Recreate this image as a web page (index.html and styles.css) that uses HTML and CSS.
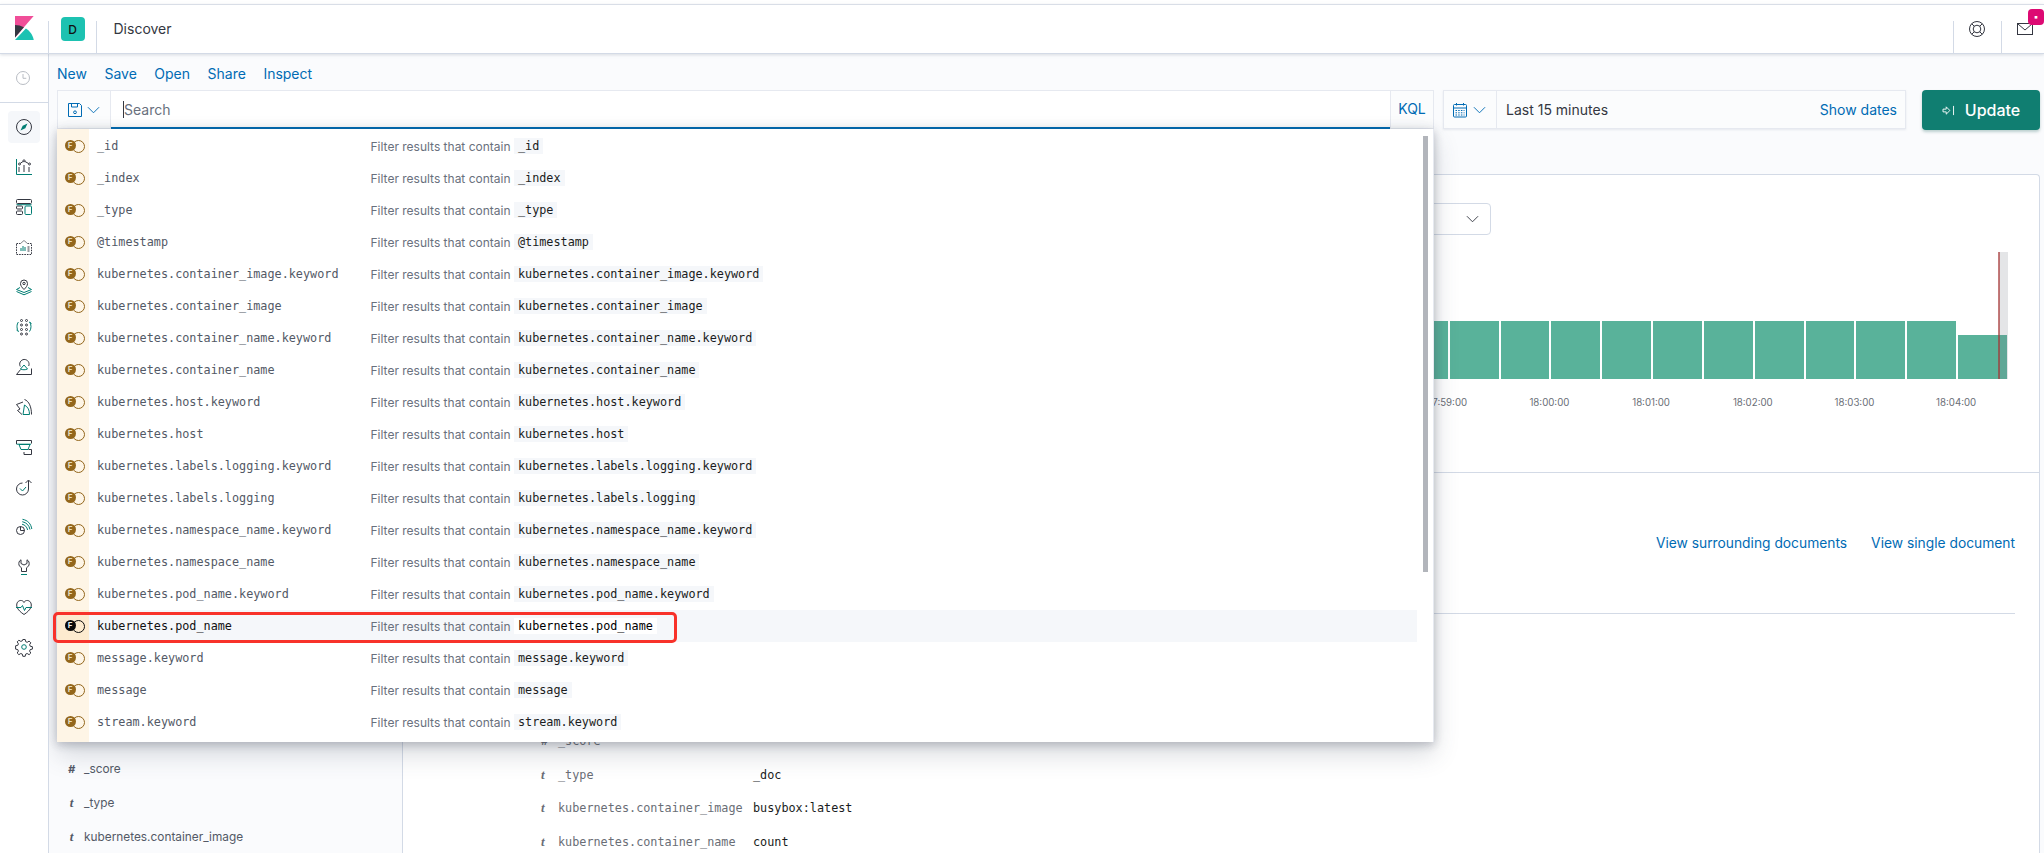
FILE: index.html
```html
<!DOCTYPE html>
<html lang="en">
<head>
<meta charset="utf-8">
<title>Discover - Kibana</title>
<link rel="stylesheet" href="styles.css">
</head>
<body>
<header class="topbar">
  <div class="logo-cell">
    <svg class="logo" viewBox="0 0 32 32"><path fill="#F04E98" d="M4 0v28.8L28.9 0z"/><path fill="#343741" d="M4 12v16.8l11.900-13.700A24.700 24.700 0 0 0 4 12"/><path fill="#1BC2B2" d="M18.500 16.700L4 32h25c-1.200-6.500-5.200-12.100-10.500-15.300"/></svg>
  </div>
  <span class="sep"></span>
  <div class="avatar-cell"><span class="avatar">D</span></div>
  <span class="sep"></span>
  <span class="crumb">Discover</span>
  <span class="sep sep-push"></span>
  <div class="head-btn head-btn-help">
    <svg class="ic" viewBox="0 0 16 16"><circle cx="8" cy="8" r="7.500"/><circle cx="8" cy="8" r="3.800"/><path d="M2.700 2.700l2.600 2.600M13.300 2.700l-2.600 2.600M2.700 13.300l2.600-2.600M13.300 13.300l-2.600-2.600"/></svg>
  </div>
  <span class="sep"></span>
  <div class="head-btn head-btn-mail">
    <svg class="ic" viewBox="0 0 16 16"><rect x=".500" y="2.500" width="15" height="11"/><path d="M1 3l7 6 7-6"/></svg>
    <span class="badge">▪</span>
  </div>
</header>

<div class="shell">
  <nav class="rail">
    <div class="recent"><svg class="ic ic-muted" viewBox="0 0 16 16"><circle cx="8" cy="8" r="6.500"/><path d="M8 4v4.300h3.300"/></svg></div>
    <ul class="rail-list">
      <li class="rail-item rail-active"><svg class="ic" viewBox="0 0 16 16"><circle cx="8" cy="8" r="7.500"/><path class="fill-teal" d="M11.500 4.500L9.300 9.300 4.500 11.500 6.700 6.700z"/></svg></li>
      <li class="rail-item"><svg class="ic" viewBox="0 0 16 16"><path class="teal" d="M.500 0v15.500H16"/><path d="M3 13V8M8 13V6M13 13V8M4.300 4.300L7 2.500M9 2.500l3.500 2"/><circle cx="3.500" cy="5" r="1"/><circle cx="8" cy="1.800" r="1"/><circle cx="13.500" cy="5" r="1"/></svg></li>
      <li class="rail-item"><svg class="ic" viewBox="0 0 16 16"><rect x=".500" y=".500" width="15" height="4" rx="1"/><rect x=".500" y="7" width="6" height="3" rx="1"/><rect x=".500" y="12" width="6" height="3.500" rx="1"/><rect class="teal" x="9" y="7" width="6.500" height="8.500" rx="1"/><path class="teal" d="M.500 5.700h15"/></svg></li>
      <li class="rail-item"><svg class="ic" viewBox="0 0 16 16"><path stroke-dasharray="1.600 1" d="M.500 4.500h4l3.500-3 3.500 3h4v11H.500z"/><path class="teal" d="M5 12V9M7 12V7M9 12V8"/><path d="M11.500 8h2M11.500 10h2M11.500 12h2"/></svg></li>
      <li class="rail-item"><svg class="ic" viewBox="0 0 16 16"><path d="M8 10.500C6 8.500 4.500 6.800 4.500 4.500a3.500 3.500 0 0 1 7 0c0 2.300-1.500 4-3.500 6z"/><circle cx="8" cy="4.500" r="1.200"/><path class="teal" d="M4 8.500L.500 10.500 8 13.500l7.500-3L12 8.500M.500 12.500L8 15.800l7.500-3.300"/></svg></li>
      <li class="rail-item"><svg class="ic" viewBox="0 0 16 16"><circle cx="5.500" cy="1.500" r="1"/><circle cx="10.500" cy="1.500" r="1"/><circle cx="5.500" cy="6" r="1"/><circle cx="10.500" cy="6" r="1"/><circle cx="5.500" cy="10.500" r="1"/><circle cx="10.500" cy="10.500" r="1"/><circle cx="5.500" cy="15" r="1"/><circle cx="10.500" cy="15" r="1"/><path class="teal" d="M2.500 3C.500 5 .500 10 2.500 12.500M.500 11l2 1.500M13.500 3c2 2 2 7 0 9.500M15.500 4.500l-2-1.500"/></svg></li>
      <li class="rail-item"><svg class="ic" viewBox="0 0 16 16"><path d="M4.600 10.500L.500 15.500h15V9.500M4.300 7.500A4.700 4.700 0 1 1 12.700 7"/><path class="teal" d="M4.500 10L8 6l3.500 4c-2 1-5 1-7 0z"/></svg></li>
      <li class="rail-item"><svg class="ic" viewBox="0 0 16 16"><path d="M8.500.500C13 2 15.500 8 15.500 15.500M7 3L.500 5.500l3.500 4.500-2.500 1.500 4.500 4"/><path class="teal" d="M8.500 6c3.500 2 5 5 5 9.500H7z"/></svg></li>
      <li class="rail-item"><svg class="ic" viewBox="0 0 16 16"><path d="M.500 1.500h15v3M.500 1.500v3.500M12.500 10.500h3v5H8V13"/><path class="teal" d="M3 5.500h11l-2 5H5zM.500 5.200H15"/></svg></li>
      <li class="rail-item"><svg class="ic" viewBox="0 0 16 16"><path d="M12.500 1.500v8.500a6 6 0 1 1-6-6M9.500 4l3-3 3 3"/><path class="teal" d="M4 9.500l2.500 2.500 3.500-4"/></svg></li>
      <li class="rail-item"><svg class="ic" viewBox="0 0 16 16"><circle cx="4.500" cy="11.500" r="4"/><path d="M4.500 7.500v4h4"/><path class="teal" d="M6 5.200c3 .6 5 2.800 5.600 5.800M6.300 2.700c4.200.8 6.800 3.600 7.700 7.800M6.500.3c5.300 1 8.400 4.400 9.300 9.700"/></svg></li>
      <li class="rail-item"><svg class="ic" viewBox="0 0 16 16"><path d="M5 .800C3 1.800 2.500 4 3 6c.5 1.500 1.800 2.300 2.500 2.800v3.700h5V8.800c.7-.5 2-1.300 2.500-2.800.5-2 0-4.200-2-5.200V4.500L8 6 5 4.500z"/><path class="teal" d="M5 15.500h6"/></svg></li>
      <li class="rail-item"><svg class="ic" viewBox="0 0 16 16"><path d="M8 15.500C5 13.500 2 11 1 8 .2 5.500 1 2 4.300 1.500 6 1.300 7.300 2 8 3.500 8.700 2 10 1.300 11.700 1.500 15 2 15.800 5.500 15 8 14 11 11 13.500 8 15.500z"/><path class="teal" d="M0 8.500h5l1.500-2 2 5 1.500-3h6"/></svg></li>
      <li class="rail-item"><svg class="ic" viewBox="0 0 16 16"><path d="M6.800.500h2.400l.5 2.200 1.500.6 1.900-1.200 1.700 1.700-1.200 1.900.6 1.500 2.200.5v2.400l-2.200.5-.6 1.500 1.200 1.900-1.700 1.700-1.900-1.200-1.500.6-.5 2.200H6.800l-.5-2.200-1.500-.6-1.900 1.200-1.700-1.700 1.200-1.900-.6-1.500-2.200-.5V6.800l2.200-.5.6-1.500L1.200 2.900 2.900 1.200l1.900 1.200 1.500-.6z"/><circle class="teal" cx="8" cy="8" r="2.300"/></svg></li>
    </ul>
  </nav>

  <main class="main">
    <div class="menu">
      <a class="menu-link">New</a>
      <a class="menu-link">Save</a>
      <a class="menu-link">Open</a>
      <a class="menu-link">Share</a>
      <a class="menu-link">Inspect</a>
    </div>

    <div class="query-row">
      <div class="search">
        <div class="save-btn">
          <svg class="ic ic-blue" viewBox="0 0 16 16"><path d="M1.500 1.500h11l2 2v11h-13z"/><path d="M4.500 1.500v3.500h6V1.500"/><circle cx="8" cy="10.300" r="1.400"/></svg>
          <svg class="chev ic-blue" viewBox="0 0 14 8"><path d="M1 1l6 6 6-6"/></svg>
        </div>
        <div class="search-input"><span class="caret"></span><span class="placeholder">Search</span></div>
        <a class="kql">KQL</a>
      </div>
      <div class="time">
        <div class="time-btn">
          <svg class="ic ic-blue" viewBox="0 0 16 16"><rect x="1.500" y="2.500" width="13" height="12.500" rx="1"/><path d="M1.500 6h13M4.500 1v2.500M11.500 1v2.500"/><path stroke-dasharray="1.500 1.200" d="M3.500 8.500h9M3.500 10.800h9M3.500 13h9"/></svg>
          <svg class="chev ic-blue" viewBox="0 0 14 8"><path d="M1 1l6 6 6-6"/></svg>
        </div>
        <span class="time-label">Last 15 minutes</span>
        <a class="show-dates">Show dates</a>
      </div>
      <button class="update">
        <svg class="update-ic" viewBox="0 0 14 12"><path d="M1 4.500h3.500V2L8.500 6l-4 4V7.500H1zM12.500 1v10"/></svg>
        <span>Update</span>
      </button>
    </div>

    <div class="content">
      <aside class="fields">
        <ul class="field-list">
          <li class="field"><i class="type">#</i><span>_score</span></li>
          <li class="field"><i class="type type-t">t</i><span>_type</span></li>
          <li class="field"><i class="type type-t">t</i><span>kubernetes.container_image</span></li>
        </ul>
      </aside>

      <section class="card">
        <div class="chart-section">
          <div class="chart-tools">
            <div class="interval"><svg class="chev chev-dark" viewBox="0 0 14 8"><path d="M1 1l6 6 6-6"/></svg></div>
          </div>
          <div class="plot">
            <span class="bar"></span><span class="bar"></span><span class="bar"></span><span class="bar"></span><span class="bar"></span><span class="bar"></span><span class="bar"></span><span class="bar"></span><span class="bar"></span><span class="bar"></span><span class="bar"></span><span class="bar"></span><span class="bar bar-last"></span>
            <span class="now-band"></span>
            <span class="now-line"></span>
          </div>
          <div class="axis">
            <span class="tick">17:59:00</span><span class="tick">18:00:00</span><span class="tick">18:01:00</span><span class="tick">18:02:00</span><span class="tick">18:03:00</span><span class="tick">18:04:00</span>
          </div>
        </div>
        <div class="doc-section">
          <div class="doc-links">
            <a class="doc-link">View surrounding documents</a>
            <a class="doc-link">View single document</a>
          </div>
          <div class="doc-rows">
            <div class="doc-row"><i class="type">#</i><span class="doc-key">_score</span><span class="doc-val"></span></div>
            <div class="doc-row"><i class="type type-t">t</i><span class="doc-key">_type</span><span class="doc-val">_doc</span></div>
            <div class="doc-row"><i class="type type-t">t</i><span class="doc-key">kubernetes.container_image</span><span class="doc-val">busybox:latest</span></div>
            <div class="doc-row"><i class="type type-t">t</i><span class="doc-key">kubernetes.container_name</span><span class="doc-val">count</span></div>
          </div>
        </div>
      </section>

      <div class="suggest">
        <div class="sugg"><span class="tok"><b>F</b></span><span class="sugg-name">_id</span><span class="sugg-desc">Filter results that contain <code>_id</code></span></div>
        <div class="sugg"><span class="tok"><b>F</b></span><span class="sugg-name">_index</span><span class="sugg-desc">Filter results that contain <code>_index</code></span></div>
        <div class="sugg"><span class="tok"><b>F</b></span><span class="sugg-name">_type</span><span class="sugg-desc">Filter results that contain <code>_type</code></span></div>
        <div class="sugg"><span class="tok"><b>F</b></span><span class="sugg-name">@timestamp</span><span class="sugg-desc">Filter results that contain <code>@timestamp</code></span></div>
        <div class="sugg"><span class="tok"><b>F</b></span><span class="sugg-name">kubernetes.container_image.keyword</span><span class="sugg-desc">Filter results that contain <code>kubernetes.container_image.keyword</code></span></div>
        <div class="sugg"><span class="tok"><b>F</b></span><span class="sugg-name">kubernetes.container_image</span><span class="sugg-desc">Filter results that contain <code>kubernetes.container_image</code></span></div>
        <div class="sugg"><span class="tok"><b>F</b></span><span class="sugg-name">kubernetes.container_name.keyword</span><span class="sugg-desc">Filter results that contain <code>kubernetes.container_name.keyword</code></span></div>
        <div class="sugg"><span class="tok"><b>F</b></span><span class="sugg-name">kubernetes.container_name</span><span class="sugg-desc">Filter results that contain <code>kubernetes.container_name</code></span></div>
        <div class="sugg"><span class="tok"><b>F</b></span><span class="sugg-name">kubernetes.host.keyword</span><span class="sugg-desc">Filter results that contain <code>kubernetes.host.keyword</code></span></div>
        <div class="sugg"><span class="tok"><b>F</b></span><span class="sugg-name">kubernetes.host</span><span class="sugg-desc">Filter results that contain <code>kubernetes.host</code></span></div>
        <div class="sugg"><span class="tok"><b>F</b></span><span class="sugg-name">kubernetes.labels.logging.keyword</span><span class="sugg-desc">Filter results that contain <code>kubernetes.labels.logging.keyword</code></span></div>
        <div class="sugg"><span class="tok"><b>F</b></span><span class="sugg-name">kubernetes.labels.logging</span><span class="sugg-desc">Filter results that contain <code>kubernetes.labels.logging</code></span></div>
        <div class="sugg"><span class="tok"><b>F</b></span><span class="sugg-name">kubernetes.namespace_name.keyword</span><span class="sugg-desc">Filter results that contain <code>kubernetes.namespace_name.keyword</code></span></div>
        <div class="sugg"><span class="tok"><b>F</b></span><span class="sugg-name">kubernetes.namespace_name</span><span class="sugg-desc">Filter results that contain <code>kubernetes.namespace_name</code></span></div>
        <div class="sugg"><span class="tok"><b>F</b></span><span class="sugg-name">kubernetes.pod_name.keyword</span><span class="sugg-desc">Filter results that contain <code>kubernetes.pod_name.keyword</code></span></div>
        <div class="sugg sugg-active"><span class="tok"><b>F</b></span><span class="sugg-name">kubernetes.pod_name</span><span class="sugg-desc">Filter results that contain <code>kubernetes.pod_name</code></span></div>
        <div class="sugg"><span class="tok"><b>F</b></span><span class="sugg-name">message.keyword</span><span class="sugg-desc">Filter results that contain <code>message.keyword</code></span></div>
        <div class="sugg"><span class="tok"><b>F</b></span><span class="sugg-name">message</span><span class="sugg-desc">Filter results that contain <code>message</code></span></div>
        <div class="sugg"><span class="tok"><b>F</b></span><span class="sugg-name">stream.keyword</span><span class="sugg-desc">Filter results that contain <code>stream.keyword</code></span></div>
        <span class="scroll-thumb"></span>
        <span class="callout"></span>
      </div>
    </div>
  </main>
</div>
</body>
</html>
```

FILE: styles.css
```css
* { box-sizing: border-box; }
html, body { margin: 0; height: 853px; overflow: hidden; }
body {
  font-family: Inter, "Liberation Sans", sans-serif;
  font-size: 14px;
  color: #343741;
  background: #fff;
  padding-top: 4px;
}
ul { list-style: none; margin: 0; padding: 0; }
a { color: #006bb4; }
i { font-style: italic; }

.ic { width: 16px; height: 16px; fill: none; stroke: #343741; stroke-width: 1; overflow: visible; }
.ic-muted { stroke: #b9bdc4; }
.ic-blue { stroke: #006bb4; fill: none; }
.teal { stroke: #017d73; }
.fill-teal { fill: #017d73; stroke: none; }
.chev { width: 13px; height: 8px; fill: none; stroke-width: 1; overflow: visible; }
.chev-dark { stroke: #343741; }

/* top bar */
.topbar {
  display: flex;
  height: 50px;
  border-top: 1px solid #d9dee7;
  border-bottom: 1px solid #d3dae6;
  background: #fff;
  box-shadow: 0 1px 3px rgba(152, 162, 179, .35);
  position: relative;
  z-index: 5;
}
.sep { width: 1px; height: 32px; align-self: flex-end; background: #d3dae6; flex: none; }
.sep-push { margin-left: auto; }
.logo-cell { width: 48px; display: flex; padding: 11px 0 0 12px; }
.logo { width: 24px; height: 24px; }
.avatar-cell { width: 47px; display: flex; justify-content: center; padding-top: 12px; }
.avatar {
  width: 24px; height: 24px; border-radius: 4px;
  background: #1dc2b1; color: #111;
  font-size: 12px; font-weight: 500;
  display: flex; align-items: center; justify-content: center;
}
.crumb { font-size: 14px; line-height: 48px; margin-left: 16.500px; height: 48px; }
.head-btn { width: 47px; display: flex; justify-content: center; padding-top: 16px; position: relative; }
.head-btn-help { padding-right: 2px; }
.head-btn-mail { width: 42px; padding-left: 4px; }
.badge {
  position: absolute; top: 4px; right: 0;
  width: 16px; height: 16px; border-radius: 4px;
  background: #dd0a73; color: #fff;
  font-size: 9px; line-height: 15px; text-align: center;
}

/* shell */
.shell { display: flex; height: 799px; }
.rail { width: 49px; flex: none; background: #fff; border-right: 1px solid #d3dae6; }
.recent { height: 49px; border-bottom: 1px solid #d3dae6; display: flex; align-items: center; justify-content: center; padding-right: 2px; }
.rail-list { padding-top: 4px; }
.rail-item { width: 48px; height: 40px; display: flex; align-items: center; justify-content: center; }
.rail-active { position: relative; z-index: 0; }
.rail-active::before {
  content: ""; position: absolute; z-index: -1; left: 8px; top: 4px;
  width: 32px; height: 32px; border-radius: 4px; background: #f5f7fa;
}

.main { flex: 1; min-width: 0; background: #fafbfd; position: relative; display: flex; flex-direction: column; overflow: hidden; }
.menu { display: flex; gap: 17.500px; padding: 11px 0 0 8px; height: 36px; line-height: 17px; }
.menu-link { font-size: 14px; }

.query-row { display: flex; padding-left: 8px; height: 40px; align-items: stretch; flex: none; }
.search {
  width: 1377px; height: 39px; display: flex;
  border: 1px solid #e6e9f0; background: #fbfcfd;
}
.save-btn { width: 53px; display: flex; align-items: center; gap: 4px; padding-left: 9px; border-right: 1px solid #e6e9f0; }
.search-input { flex: 1; background: #fff; border-bottom: 2px solid #006bb4; display: flex; align-items: center; padding-left: 12px; position: relative; margin-bottom: -1px; }
.caret { width: 1px; height: 17px; background: #343741; }
.placeholder { color: #69707d; font-size: 14px; }
.kql { width: 43px; text-align: center; line-height: 36px; border-left: 1px solid #e6e9f0; font-size: 14px; }
.time {
  width: 463px; height: 39px; margin-left: 9px;
  display: flex; align-items: center;
  border: 1px solid #e6e9f0; background: #fbfcfd;
  box-shadow: 0 1px 2px rgba(152, 162, 179, .2);
}
.time-btn { width: 53px; height: 100%; display: flex; align-items: center; gap: 5px; padding-left: 8px; border-right: 1px solid #e6e9f0; }
.time-label { margin-left: 9px; font-size: 14px; }
.show-dates { margin-left: auto; margin-right: 8px; font-size: 14px; }
.update {
  width: 118px; height: 40px; margin-left: 16px; border: 0; border-radius: 4px;
  background: #107e71; color: #fff;
  font: 500 16px Inter, "Liberation Sans", sans-serif;
  display: flex; align-items: center; justify-content: center; gap: 10px;
  box-shadow: 0 2px 3px rgba(0, 80, 70, .25);
}
.update-ic { width: 13px; height: 11px; fill: none; stroke: #fff; stroke-width: 1; }

/* content */
.content { flex: 1; display: flex; position: relative; padding-right: 4px; min-height: 0; }
.fields { width: 353px; flex: none; padding-top: 622px; overflow: hidden; }
.field { height: 34px; display: flex; align-items: center; font-size: 11.850px; color: #535966; }
.type { width: 15px; margin-left: 15px; font-size: 11px; font-weight: 700; color: #535966; flex: none; text-align: center; margin-right: 5px; }
.type-t { font-family: "Liberation Serif", serif; font-size: 13px; }

.card {
  flex: 1; margin-top: 44px; overflow: hidden;
  background: #fff; border: 1px solid #d3dae6; border-bottom: 0; border-radius: 4px 4px 0 0;
}
.chart-section { height: 298px; border-bottom: 1px solid #d3dae6; }
.chart-tools { display: flex; justify-content: flex-end; padding: 28px 548px 0 0; }
.interval {
  width: 200px; height: 32px; border: 1px solid #d3dae6; border-radius: 4px; background: #fff;
  display: flex; align-items: center; justify-content: flex-end; padding-right: 11px;
}
.plot { height: 127px; margin-top: 17px; display: flex; justify-content: flex-end; align-items: flex-end; gap: 2px; padding-right: 32px; position: relative; }
.bar { width: 48.850px; height: 58px; background: #59b29a; flex: none; }
.bar-last { height: 44px; }
.now-band { position: absolute; right: 31px; top: 0; bottom: 0; width: 9.500px; background: rgba(120, 125, 135, .2); }
.now-line { position: absolute; right: 39px; top: 0; bottom: 0; width: 2px; background: rgba(165, 50, 50, .65); }
.axis { display: flex; justify-content: flex-end; padding-right: 32px; margin-top: 16px; }
.tick { width: 101.700px; flex: none; text-align: center; font-size: 9.700px; line-height: 16px; color: #6a6e76; }

.doc-section { position: relative; }
.doc-links { display: flex; justify-content: flex-end; gap: 24px; height: 141px; padding-top: 62px; line-height: 17px; border-bottom: 1px solid #d3dae6; margin-right: 24px; }
.doc-link { font-size: 13.800px; }
.doc-rows { padding-top: 110.500px; padding-left: 138px; }
.doc-row { display: flex; align-items: center; height: 33.500px; font: 11.800px "DejaVu Sans Mono", monospace; color: #6a6e76; }
.doc-row .type { margin: 0; width: 17px; font-family: Inter, sans-serif; text-align: left; flex: none; font-size: 10px; color: #6a6e76; }
.doc-row .type-t { font-family: "Liberation Serif", serif; font-size: 13px; }
.doc-key { width: 195px; flex: none; }
.doc-val { color: #1a1c21; }

/* suggestions dropdown */
.suggest {
  position: absolute; left: 8px; top: -1px;
  width: 1377px; height: 613px; padding: 1px 0 4px;
  background: linear-gradient(to right, #fef5e6 32px, #fff 32px);
  border-right: 1px solid #e6e9f0;
  box-shadow: 0 12px 24px rgba(60, 70, 90, .2), 0 4px 8px rgba(60, 70, 90, .16), 0 0 10px rgba(60, 70, 90, .16);
  z-index: 3;
}
.sugg { width: 1360px; height: 32px; display: flex; align-items: center; position: relative; }
.tok { width: 32px; height: 12px; flex: none; position: relative; }
.tok b {
  position: absolute; left: 7.500px; top: 0; width: 11px; height: 11px; border-radius: 50%;
  background: #93661b; color: #e9dcc0; font: 700 8px/11px Inter, sans-serif; text-align: center; z-index: 1;
}
.tok::after {
  content: ""; position: absolute; left: 14.500px; top: 0; width: 11px; height: 11px; border-radius: 50%;
  border: 1px solid #93661b;
}
.sugg-name { width: 273.500px; margin-left: 8px; flex: none; font: 11.800px "DejaVu Sans Mono", monospace; color: #535966; }
.sugg-desc { font-size: 12px; color: #69707d; display: flex; align-items: center; white-space: pre; }
.sugg-desc code { font: 11.800px/16px "DejaVu Sans Mono", monospace; color: #1a1c21; background: #f5f7fa; padding: 0 4px; }
.sugg-active { background: linear-gradient(to right, #fdebcf 32px, #f5f7fa 32px); }
.sugg-active .tok b { background: #0b0b0b; color: #eee; }
.sugg-active .tok::after { border-color: #0b0b0b; }
.sugg-active .sugg-name { color: #111; }
.sugg-active code { background: #fff; color: #000; }

.scroll-thumb { position: absolute; left: 1366px; top: 7px; width: 4.500px; height: 436px; background: #b2b5bb; }
.callout {
  position: absolute; left: -4px; top: 483px; width: 624px; height: 31px;
  border: 3px solid #f8322a; border-radius: 5px;
}
```
